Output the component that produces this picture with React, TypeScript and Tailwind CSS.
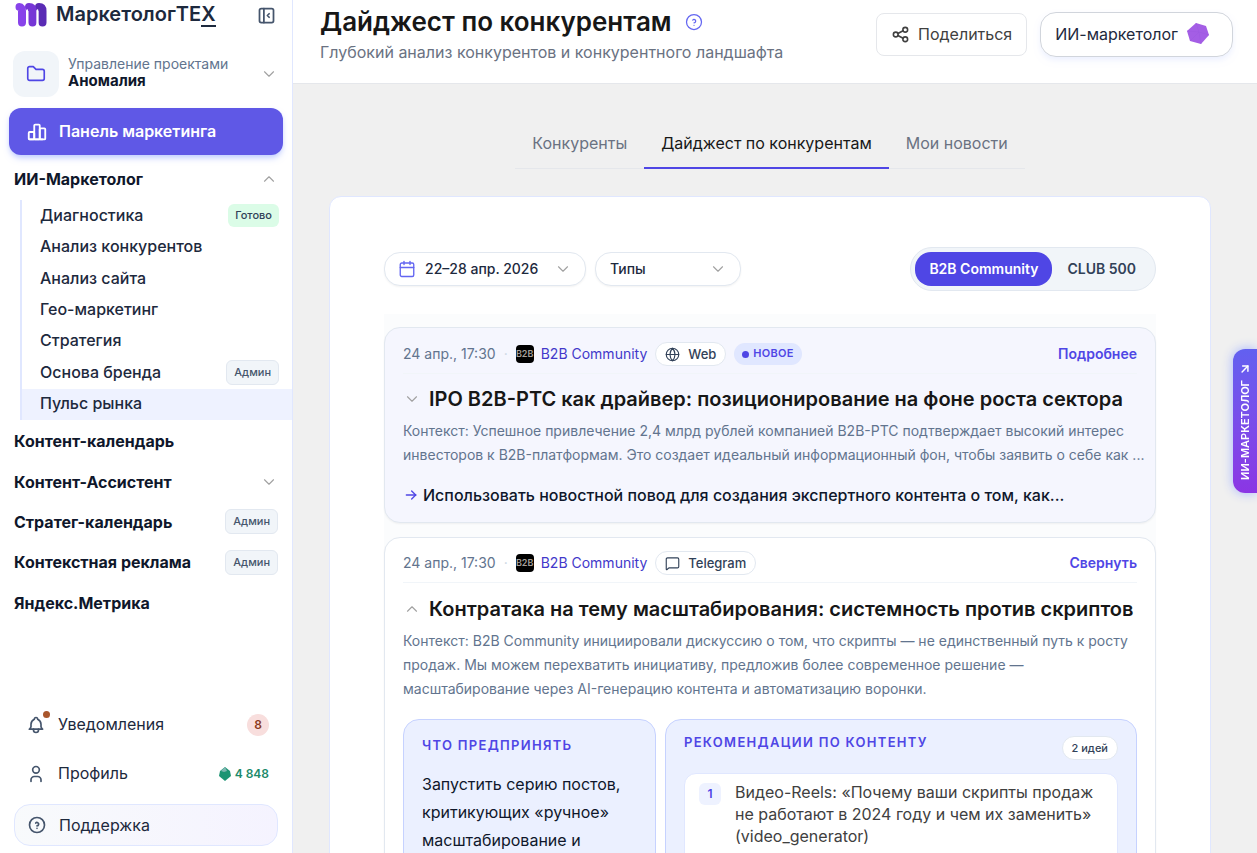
import { useState } from 'react'
import { Calendar, Globe, MessageSquare } from 'lucide-react'
import {
	TbArrowRight,
	TbArrowUpRight,
	TbBell,
	TbChartBar,
	TbChevronDown,
	TbChevronUp,
	TbFolder,
	TbHelpCircle,
	TbLayoutSidebarLeftCollapse,
	TbShare,
	TbUser,
} from 'react-icons/tb'

const aiItems = [
	{ title: 'Диагностика', badge: 'Готово' },
	{ title: 'Анализ конкурентов' },
	{ title: 'Анализ сайта' },
	{ title: 'Гео-маркетинг' },
	{ title: 'Стратегия' },
	{ title: 'Основа бренда', badge: 'Админ' },
	{ title: 'Пульс рынка', active: true },
]

const sections = [
	{ title: 'Контент-календарь' },
	{ title: 'Контент-Ассистент', expandable: true },
	{ title: 'Стратег-календарь', badge: 'Админ' },
	{ title: 'Контекстная реклама', badge: 'Админ' },
	{ title: 'Яндекс.Метрика' },
]

const tabs = ['Конкуренты', 'Дайджест по конкурентам', 'Мои новости']

function Badge({ title }: { title: string }) {
	if (title === 'Готово') {
		return <span className="rounded-md bg-green-100 px-[7px] py-[3px] text-[11px] leading-[17px] font-medium text-slate-700">{title}</span>
	}
	return (
		<span className="rounded-md border border-slate-200 bg-slate-100 px-[7px] py-[3px] text-[11px] leading-[17px] font-medium text-slate-600">
			{title}
		</span>
	)
}

function Logo() {
	return (
		<svg className="h-[26px] w-8" viewBox="0 0 32 26" fill="none" strokeWidth="8" strokeLinecap="round" aria-hidden="true">
			<path d="M27.500 20.500V9c0-2.500-1-4-3.500-4" stroke="#5a2bb5" />
			<path d="M17.500 20.500V9c0-2.500-1-4-3.500-4" stroke="#7636d6" />
			<path d="M7 20.500V9C7 6.500 6 5 4.500 5" stroke="#8843ea" />
			<path d="M12.200 8v16M22.500 8v16" stroke="#fff" strokeWidth="1.600" />
			<path d="M-1 8h3.200v16H-1Z" fill="#fff" />
		</svg>
	)
}

function Sidebar() {
	return (
		<aside className="flex w-[293px] shrink-0 flex-col border-r border-indigo-100 bg-white">
			<div className="flex h-[30px] items-center pr-[15px] pl-[15px]">
				<Logo />
				<span className="ml-[9px] text-xl leading-[22px] font-semibold text-slate-800">
					МаркетологTE<span className="inline-block border-b-2 border-slate-800 leading-[21px]">X</span>
				</span>
				<button type="button" className="ml-auto text-slate-600" aria-label="Свернуть меню">
					<TbLayoutSidebarLeftCollapse size={21} />
				</button>
			</div>

			<button type="button" className="mt-[21px] flex items-center pr-[14px] pl-[13px] text-left">
				<span className="flex size-[46px] items-center justify-center rounded-xl bg-slate-100 text-[#4f46e5]">
					<TbFolder size={22} strokeWidth={1.8} />
				</span>
				<span className="ml-[9px] flex flex-col pb-1">
					<span className="text-sm leading-[17px] text-slate-500">Управление проектами</span>
					<span className="text-[15px] leading-[17px] font-bold text-slate-900">Аномалия</span>
				</span>
				<TbChevronDown size={18} strokeWidth={1.5} className="ml-auto text-neutral-400" />
			</button>

			<a
				href="#"
				className="mx-[9px] mt-[11px] flex h-[47px] items-center rounded-xl bg-[#5f58e6] px-[17px] text-base font-semibold text-white shadow-md shadow-indigo-200"
			>
				<TbChartBar size={22} />
				<span className="ml-[11px] pb-[2px]">Панель маркетинга</span>
			</a>

			<nav>
				<button type="button" className="flex h-[45px] w-full items-center justify-between px-[14px] pt-[3px] text-base font-bold text-slate-900">
					ИИ-Маркетолог
					<TbChevronUp size={18} strokeWidth={1.5} className="text-neutral-400" />
				</button>
				<ul className="ml-5 grid h-[220px] auto-rows-fr border-l-2 border-indigo-100">
					{aiItems.map(item => (
						<li key={item.title}>
							<a
								href="#"
								className={
									item.active
										? 'flex h-full items-center bg-indigo-50 pl-[18px] text-base font-medium text-slate-800'
										: 'flex h-full items-center justify-between pr-[13px] pl-[18px] text-base font-medium text-slate-800'
								}
							>
								<span className="pb-[2px]">{item.title}</span>
								{item.badge && <Badge title={item.badge} />}
							</a>
						</li>
					))}
				</ul>
				<ul className="mt-px grid h-[202px] auto-rows-fr">
					{sections.map(item => (
						<li key={item.title}>
							<a href="#" className="flex h-full items-center justify-between px-[14px] text-base font-bold text-slate-900">
								{item.title}
								{item.badge && <Badge title={item.badge} />}
								{item.expandable && <TbChevronDown size={18} strokeWidth={1.5} className="text-neutral-400" />}
							</a>
						</li>
					))}
				</ul>
			</nav>

			<div className="mt-auto flex flex-col px-[14px] pb-[7px] text-base text-slate-800">
				<a href="#" className="flex h-[49px] items-center pr-[9px] pl-3">
					<span className="relative text-slate-600">
						<TbBell size={20} />
						<span className="absolute -top-1 -right-1 size-[7px] rounded-full bg-[#a9562c]" />
					</span>
					<span className="ml-3 pb-px">Уведомления</span>
					<span className="ml-auto flex size-[22px] items-center justify-center rounded-full bg-[#f8dedd] text-xs font-semibold text-[#8b3a1c]">
						8
					</span>
				</a>
				<a href="#" className="flex h-[49px] items-center pr-[9px] pl-3">
					<TbUser size={20} className="text-slate-600" />
					<span className="ml-3 pb-px">Профиль</span>
					<span className="ml-auto flex items-center gap-1 text-xs font-semibold text-[#1c8a6b]">
						<svg width="12" height="14" viewBox="0 0 12 14" aria-hidden="true">
							<path d="M6 0 11 4l1 5-6 5-6-5 1-5Z" fill="#1c9473" />
							<path d="m6 0 2 4-3 1-3-1Z" fill="#7fb8b2" />
						</svg>
						4 848
					</span>
				</a>
				<a
					href="#"
					className="mt-[6px] flex h-[42px] items-center rounded-2xl border border-indigo-100 bg-linear-to-r from-slate-50 to-violet-50 px-3"
				>
					<TbHelpCircle size={20} className="text-slate-600" />
					<span className="ml-3 pb-px">Поддержка</span>
				</a>
			</div>
		</aside>
	)
}

function PageHeader() {
	return (
		<header className="flex h-[84px] shrink-0 items-start justify-between border-b border-gray-200 bg-white pr-6 pl-[27px]">
			<div className="pt-1">
				<div className="flex items-center">
					<h1 className="text-[26px] leading-9 font-semibold text-neutral-900">Дайджест по конкурентам</h1>
					<button type="button" className="ml-3 text-[#6366f1]" aria-label="Справка">
						<TbHelpCircle size={20} strokeWidth={1.5} />
					</button>
				</div>
				<p className="text-base leading-6 text-gray-500">Глубокий анализ конкурентов и конкурентного ландшафта</p>
			</div>
			<div className="flex items-center gap-[13px] pt-3">
				<button type="button" className="flex h-[43px] items-center gap-2 rounded-lg border border-gray-200 px-[14px] pb-px text-base text-neutral-700">
					<TbShare size={19} />
					Поделиться
				</button>
				<button
					type="button"
					className="flex h-[45px] items-center gap-2 rounded-2xl border border-gray-300 pr-[22px] pb-px pl-[14px] text-base text-slate-800 shadow-md shadow-indigo-50"
				>
					ИИ-маркетолог
					<svg width="24" height="24" viewBox="0 0 24 24" aria-hidden="true">
						<path d="M10 1 20 4l3 9-8 9-11-3L1 9Z" fill="#a45ee5" />
						<path d="m10 1 3 9 10 3M13 10 4 19M13 10l2 12M13 10 1 9" stroke="#9c58e0" strokeWidth=".5" fill="none" />
					</svg>
				</button>
			</div>
		</header>
	)
}

function Filters() {
	const [source, setSource] = useState('B2B Community')

	return (
		<div className="flex items-center justify-between">
			<div className="flex gap-[9px]">
				<label className="relative flex w-[202px] items-center">
					<Calendar size={18} strokeWidth={1.8} className="pointer-events-none absolute left-[14px] text-[#6366f1]" />
					<select
						aria-label="Период"
						className="h-[34px] w-full appearance-none rounded-2xl border border-slate-200 bg-white pl-10 text-sm font-medium text-slate-800 shadow-xs"
					>
						<option>22–28 апр. 2026</option>
					</select>
					<TbChevronDown size={18} strokeWidth={1.5} className="pointer-events-none absolute right-[14px] text-neutral-400" />
				</label>
				<label className="relative flex w-[146px] items-center">
					<select
						aria-label="Типы"
						className="h-[34px] w-full appearance-none rounded-2xl border border-slate-200 bg-white pl-[14px] text-sm font-medium text-slate-800 shadow-xs"
					>
						<option>Типы</option>
					</select>
					<TbChevronDown size={18} strokeWidth={1.5} className="pointer-events-none absolute right-[14px] text-neutral-400" />
				</label>
			</div>
			<div className="flex rounded-full border border-slate-200 bg-slate-100 p-1">
				{['B2B Community', 'CLUB 500'].map(name => (
					<button
						key={name}
						type="button"
						onClick={() => setSource(name)}
						className={
							source === name
								? 'h-[34px] rounded-2xl bg-[#4f46e5] px-[14px] text-sm font-semibold text-white'
								: 'h-[34px] rounded-2xl px-[15px] text-sm font-semibold text-slate-700'
						}
					>
						{name}
					</button>
				))}
			</div>
		</div>
	)
}

function CardMeta({ channel, isNew, action }: { channel: string; isNew?: boolean; action: string }) {
	return (
		<div className="flex h-[37px] items-center border-b border-slate-100 pb-[2px] text-sm">
			<time className="text-slate-500">24 апр., 17:30</time>
			<span className="mx-2 text-slate-300">·</span>
			<span className="flex size-[18px] items-center justify-center overflow-hidden rounded bg-black text-[9px] font-semibold text-stone-400">
				B2B
			</span>
			<a href="#" className="ml-[7px] text-[#4338ca]">
				B2B Community
			</a>
			<span className="ml-2 flex h-6 items-center gap-2 rounded-full border border-slate-200 bg-white px-[9px] text-[13px] font-medium text-slate-700">
				{channel === 'Web' ? <Globe size={15} strokeWidth={1.8} /> : <MessageSquare size={15} strokeWidth={1.8} />}
				{channel}
			</span>
			{isNew && (
				<span className="ml-2 flex h-[22px] items-center gap-1 rounded-full bg-indigo-100 px-2 text-[11px] font-semibold tracking-wide text-[#4f46e5]">
					<span className="size-[7px] rounded-full bg-[#4f46e5]" />
					НОВОЕ
				</span>
			)}
			<button type="button" className="ml-auto font-semibold text-[#4f46e5]">
				{action}
			</button>
		</div>
	)
}

function Digest() {
	return (
		<div className="mt-[23px] flex flex-col gap-[14px] bg-slate-50/60 pt-[13px]">
			<article className="rounded-2xl border border-slate-200 bg-[#f5f6fe] px-[18px] pt-[9px] pb-[15px] shadow-xs">
				<CardMeta channel="Web" isNew action="Подробнее" />
				<h2 className="mt-[11px] flex items-center gap-2 text-xl leading-7 font-semibold text-neutral-900">
					<TbChevronDown size={18} strokeWidth={1.5} className="shrink-0 text-neutral-400" />
					IPO B2B-РТС как драйвер: позиционирование на фоне роста сектора
				</h2>
				<p className="-mr-3 mt-[6px] text-sm leading-6 text-slate-500">
					Контекст: Успешное привлечение 2,4 млрд рублей компанией B2B-РТС подтверждает высокий интерес инвесторов к B2B-платформам. Это
					создает идеальный информационный фон, чтобы заявить о себе как ...
				</p>
				<p className="mt-4 flex items-center gap-1 text-base leading-6 font-medium text-slate-900">
					<TbArrowRight size={16} className="text-[#4f46e5]" />
					Использовать новостной повод для создания экспертного контента о том, как...
				</p>
			</article>

			<article className="rounded-2xl border border-slate-200 bg-white px-[18px] pt-2 pb-4 shadow-xs">
				<CardMeta channel="Telegram" action="Свернуть" />
				<h2 className="mt-3 flex items-center gap-2 text-xl leading-7 font-semibold text-neutral-900">
					<TbChevronUp size={18} strokeWidth={1.5} className="shrink-0 text-neutral-400" />
					Контратака на тему масштабирования: системность против скриптов
				</h2>
				<p className="mt-[6px] text-sm leading-6 text-slate-500">
					Контекст: B2B Community инициировали дискуссию о том, что скрипты — не единственный путь к росту продаж. Мы можем перехватить
					инициативу, предложив более современное решение — масштабирование через AI-генерацию контента и автоматизацию воронки.
				</p>
				<div className="mt-[18px] grid grid-cols-[253fr_472fr] gap-[9px]">
					<section className="rounded-2xl border border-indigo-200 bg-[#ebf0ff] px-[18px] py-4">
						<h3 className="text-[13px] leading-[18px] font-semibold tracking-widest text-[#4f46e5]">ЧТО ПРЕДПРИНЯТЬ</h3>
						<p className="mt-4 text-base leading-7 text-slate-900">
							Запустить серию постов, критикующих «ручное» масштабирование и предлагающих системный подход
						</p>
					</section>
					<section className="rounded-2xl border border-indigo-200 bg-[#ebf0ff] px-[18px] py-4">
						<div className="flex items-start justify-between">
							<h3 className="text-[13px] leading-3 font-semibold tracking-widest text-[#4f46e5]">РЕКОМЕНДАЦИИ ПО КОНТЕНТУ</h3>
							<span className="flex h-6 items-center rounded-full border border-slate-200 bg-white px-[9px] text-[11px] font-medium text-slate-700">
								2 идей
							</span>
						</div>
						<div className="mt-[13px] flex rounded-xl border border-indigo-100 bg-white px-[14px] pt-[7px] pb-5">
							<span className="mt-[2px] flex size-[22px] shrink-0 items-center justify-center rounded-md bg-indigo-50 text-xs font-semibold text-[#4f46e5]">
								1
							</span>
							<p className="ml-[14px] text-base leading-[22px] text-neutral-700">
								Видео-Reels: «Почему ваши скрипты продаж не работают в 2024 году и чем их заменить» (video_generator)
							</p>
						</div>
					</section>
				</div>
			</article>
		</div>
	)
}

export default function App() {
	const [tab, setTab] = useState('Дайджест по конкурентам')

	return (
		<div className="flex h-screen overflow-hidden bg-[#f0f0f0] font-['Inter',sans-serif]">
			<Sidebar />
			<div className="flex min-w-0 flex-1 flex-col">
				<PageHeader />
				<main className="flex-1 overflow-hidden pr-[46px] pl-[36px]">
					<div className="mt-9 flex justify-center">
						<div className="flex border-b border-gray-200" role="tablist">
							{tabs.map(name => (
								<button
									key={name}
									type="button"
									role="tab"
									aria-selected={tab === name}
									onClick={() => setTab(name)}
									className={
										tab === name
											? '-mb-px h-[49px] border-b-2 border-[#4f46e5] px-[17px] pb-px text-base text-neutral-900'
											: '-mb-px h-[49px] px-[17px] pb-[3px] text-base text-gray-500'
									}
								>
									{name}
								</button>
							))}
						</div>
					</div>
					<div className="mt-[27px] rounded-xl border border-indigo-100 bg-white px-[54px] pt-[50px] pb-12">
						<Filters />
						<Digest />
					</div>
				</main>
			</div>

			{/* Floating assistant handle */}
			<button
				type="button"
				className="fixed top-[349px] right-0 flex h-36 w-6 flex-col items-center justify-center gap-1 rounded-l-xl bg-linear-to-b from-[#6260f0] to-[#8b35e4] text-white shadow-[0_0_12px] shadow-indigo-300"
			>
				<TbArrowUpRight size={14} strokeWidth={2.5} />
				<span className="rotate-180 text-[11px] font-semibold [writing-mode:vertical-rl]">ИИ-МАРКЕТОЛОГ</span>
			</button>
		</div>
	)
}
